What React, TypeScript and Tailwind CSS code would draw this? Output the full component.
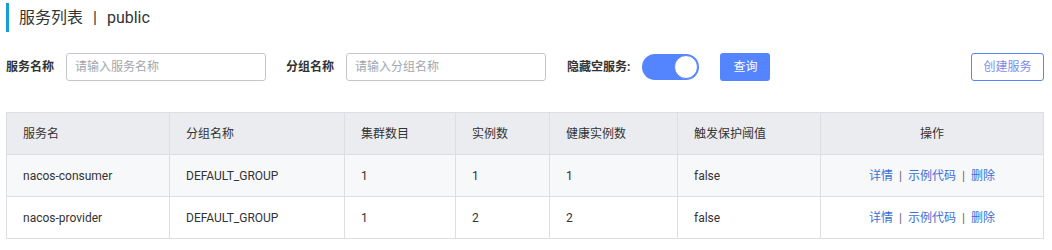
const rows = [
  { name: 'nacos-consumer', group: 'DEFAULT_GROUP', clusters: 1, instances: 1, healthy: 1, threshold: 'false' },
  { name: 'nacos-provider', group: 'DEFAULT_GROUP', clusters: 1, instances: 2, healthy: 2, threshold: 'false' },
]

const font = "font-['Roboto','Noto_Sans_CJK_SC',sans-serif]"

export default function App() {
  return (
    <div className={`w-[1052px] h-[250px] bg-white text-[#333] ${font}`}>
      {/* 标题 */}
      <div className="pt-[3px] pl-[6px]">
        <div className="h-[29px] border-l-[3px] border-[#12a0d7] pl-[10px] flex items-center text-[16px] text-[#333]">
          服务列表<span className="mx-[10px]">|</span>public
        </div>
      </div>

      {/* 查询条件 */}
      <div className="mt-[21px] pl-[6px] pr-[8px] flex items-center h-[28px] text-[12px]">
        <span className="font-bold text-[#333]">服务名称</span>
        <input
          placeholder="请输入服务名称"
          className="ml-[12px] w-[200px] h-[28px] border border-[#c4c6cf] rounded-[3px] px-[8px] text-[12px] placeholder:text-[#a3a6ad] outline-none"
        />
        <span className="ml-[20px] font-bold text-[#333]">分组名称</span>
        <input
          placeholder="请输入分组名称"
          className="ml-[12px] w-[200px] h-[28px] border border-[#c4c6cf] rounded-[3px] px-[8px] text-[12px] placeholder:text-[#a3a6ad] outline-none"
        />
        <span className="ml-[21px] font-bold text-[#333]">隐藏空服务:</span>
        <div className="ml-[12px] w-[57px] h-[26px] rounded-full bg-[#5584ff] flex items-center justify-end pr-[1px]">
          <div className="w-[24px] h-[24px] rounded-full bg-white border border-[#5584ff]" />
        </div>
        <button className="ml-[21px] w-[50px] h-[28px] rounded-[3px] bg-[#5584ff] text-white text-[12px]">查询</button>
        <button className="ml-auto w-[73px] h-[28px] rounded-[3px] border border-[#5584ff] bg-white text-[#7c8ce8] text-[12px]">
          创建服务
        </button>
      </div>

      {/* 服务列表 */}
      <div className="mt-[31px] pl-[6px] pr-[8px]">
        <table className="w-[1038px] table-fixed border-collapse text-[12px] text-[#333]">
          <colgroup>
            <col className="w-[163px]" />
            <col className="w-[175px]" />
            <col className="w-[111px]" />
            <col className="w-[94px]" />
            <col className="w-[128px]" />
            <col className="w-[143px]" />
            <col />
          </colgroup>
          <thead>
            <tr className="h-[42px] bg-[#ebecf0]">
              {['服务名', '分组名称', '集群数目', '实例数', '健康实例数', '触发保护阈值'].map(h => (
                <th key={h} className="border border-[#dcdee3] px-[16px] text-left font-normal">{h}</th>
              ))}
              <th className="border border-[#dcdee3] px-[16px] text-center font-normal">操作</th>
            </tr>
          </thead>
          <tbody>
            {rows.map((r, i) => (
              <tr key={r.name} className={`h-[42px] ${i === 0 ? 'bg-[#f7f8fa]' : 'bg-white'}`}>
                <td className="border border-[#dcdee3] px-[16px]">{r.name}</td>
                <td className="border border-[#dcdee3] px-[16px]">{r.group}</td>
                <td className="border border-[#dcdee3] px-[16px]">{r.clusters}</td>
                <td className="border border-[#dcdee3] px-[16px]">{r.instances}</td>
                <td className="border border-[#dcdee3] px-[16px]">{r.healthy}</td>
                <td className="border border-[#dcdee3] px-[16px]">{r.threshold}</td>
                <td className="border border-[#dcdee3] px-[16px] text-center">
                  <a className="text-[#3a6fd6]">详情</a>
                  <span className="mx-[6px] text-[#666]">|</span>
                  <a className="text-[#3a6fd6]">示例代码</a>
                  <span className="mx-[6px] text-[#666]">|</span>
                  <a className="text-[#3a6fd6]">删除</a>
                </td>
              </tr>
            ))}
          </tbody>
        </table>
      </div>
    </div>
  )
}
